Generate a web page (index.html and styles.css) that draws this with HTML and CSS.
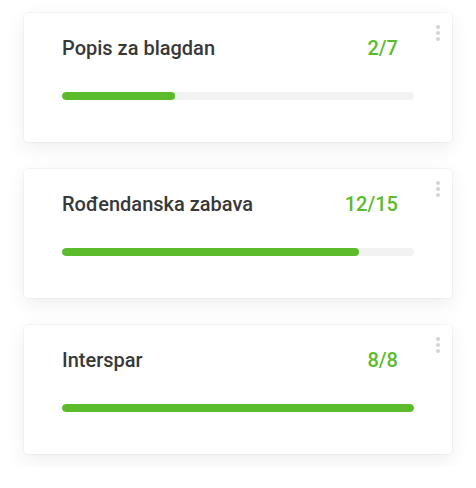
FILE: index.html
```html
<!DOCTYPE html>
<html lang="hr">
<head>
	<meta charset="UTF-8">
	<title>Popisi</title>
	<link rel="stylesheet" href="styles.css">
</head>
<body>
	<div id="wrap">
		<!-- popis 1 -->
		<div class="card">
			<a href="javascript:;" class="more"><i></i><i></i><i></i></a>
			<div class="head">
				<span class="title">Popis za blagdan</span>
				<span class="count">2/7</span>
			</div>
			<div class="bar"><span style="width: 32%"></span></div>
		</div>
		<!-- popis 2 -->
		<div class="card">
			<a href="javascript:;" class="more"><i></i><i></i><i></i></a>
			<div class="head">
				<span class="title">Rođendanska zabava</span>
				<span class="count">12/15</span>
			</div>
			<div class="bar"><span style="width: 84.4%"></span></div>
		</div>
		<!-- popis 3 -->
		<div class="card">
			<a href="javascript:;" class="more"><i></i><i></i><i></i></a>
			<div class="head">
				<span class="title">Interspar</span>
				<span class="count">8/8</span>
			</div>
			<div class="bar"><span style="width: 100%"></span></div>
		</div>
	</div>
</body>
</html>
```

FILE: styles.css
```css
body {
	margin: 0;
	background: #fff;
	font-family: Roboto, "Liberation Sans", Arial, sans-serif;
}
a {
	text-decoration: none;
}
#wrap {
	display: flex;
	flex-direction: column;
	gap: 27px;
	padding: 13px 24px;
}
.card {
	position: relative;
	height: 129px;
	box-sizing: border-box;
	padding: 23px 38px 0;
	background: #fff;
	border-radius: 4px;
	box-shadow: 0 0 0 1px rgba(0,0,0,.03), 0 6px 20px rgba(0,0,0,.07);
}
.head {
	display: flex;
	justify-content: space-between;
	align-items: center;
	height: 24px;
	line-height: 24px;
	padding-right: 16px;
	font-size: 20px;
	font-weight: 500;
}
.title {
	color: #383838;
}
.count {
	color: #5bbb2a;
}
.bar {
	height: 8px;
	margin-top: 32px;
	border-radius: 4px;
	background: #f2f2f2;
	overflow: hidden;
}
.bar span {
	display: block;
	height: 100%;
	border-radius: 4px;
	background: #5bbb2a;
}
.more {
	position: absolute;
	top: 12px;
	right: 12px;
	display: flex;
	flex-direction: column;
	gap: 2px;
}
.more i {
	display: block;
	width: 4px;
	height: 4px;
	border-radius: 50%;
	background: #d4d4d4;
}
```
